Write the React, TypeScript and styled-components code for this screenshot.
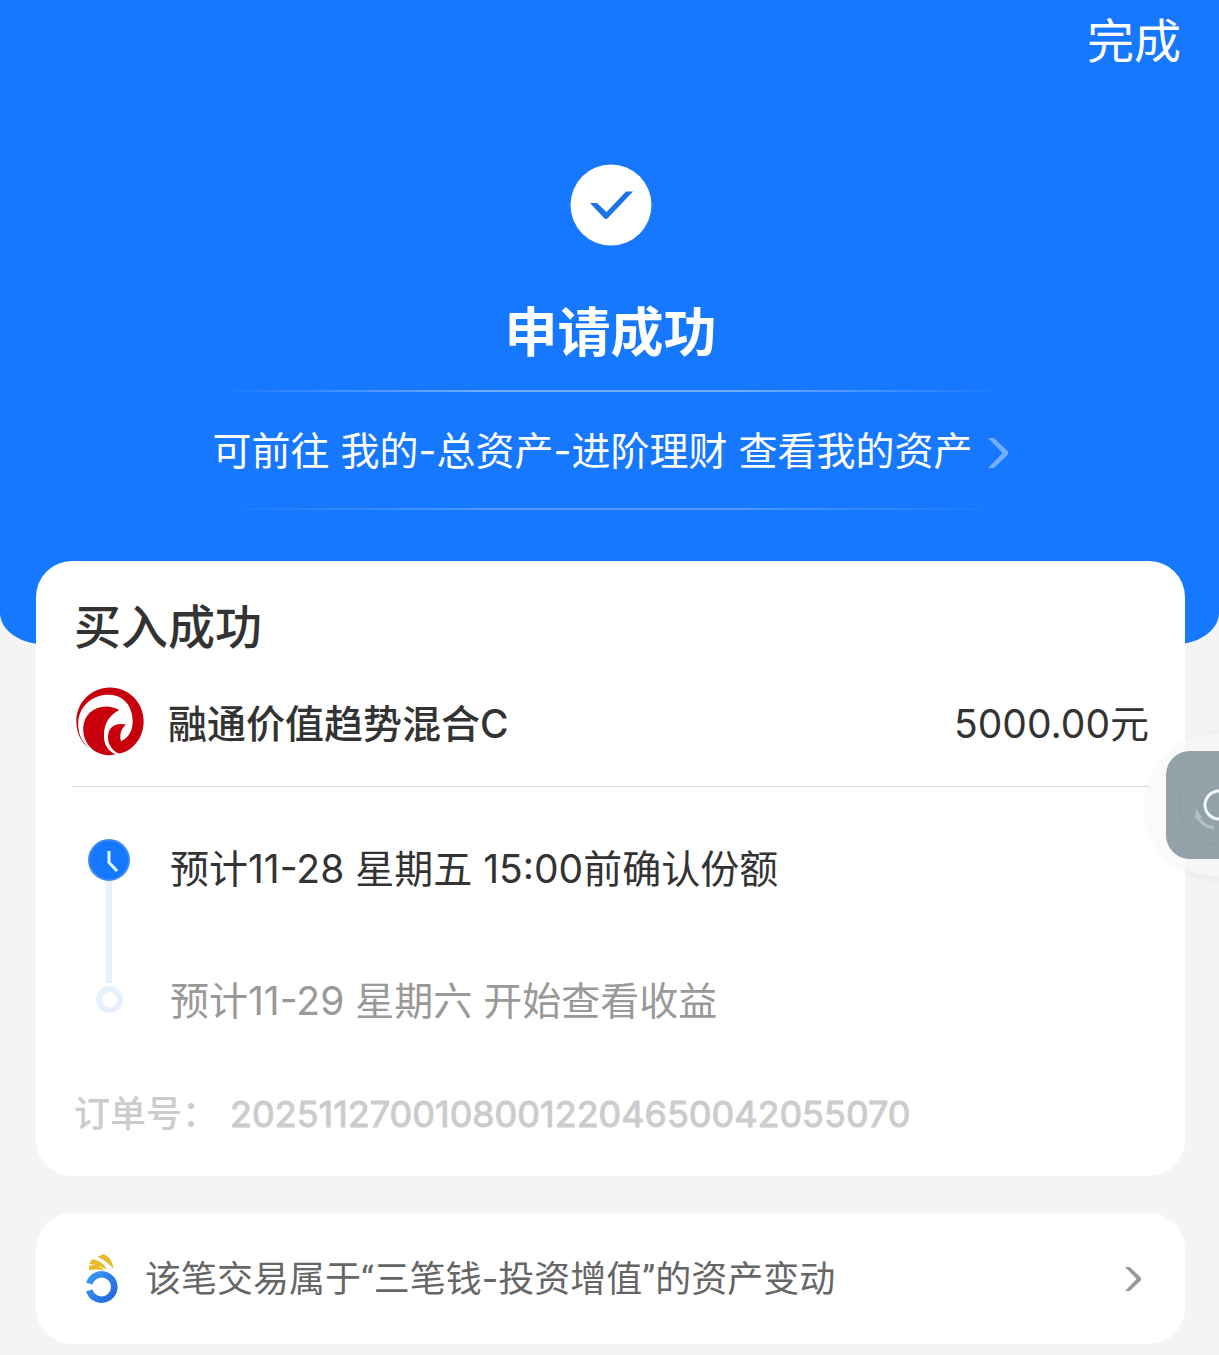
import React from 'react';
import styled, { createGlobalStyle } from 'styled-components';

const GlobalStyle = createGlobalStyle`
  *, *::before, *::after { box-sizing: border-box; }
  body {
    margin: 0;
    background: #f4f4f4;
    color: #333;
    font-family: Inter, 'Noto Sans CJK SC', sans-serif;
  }
  h1, h2, p, ol, dl, dd { margin: 0; padding: 0; }
`;

const Page = styled.div`
  position: relative;
  min-height: 100vh;
  overflow: hidden;
  padding-bottom: 11px;
`;

const Hero = styled.header`
  display: flex;
  flex-direction: column;
  align-items: center;
  height: 645px;
  padding-left: 2px;
  background: #1677ff;
  color: #fff;
  border-radius: 0 0 48px 48px / 0 0 32px 32px;
`;

const TopBar = styled.div`
  display: flex;
  justify-content: flex-end;
  align-self: stretch;
  padding: 5px 38px 0;
`;

const DoneButton = styled.button`
  border: 0;
  padding: 0;
  background: none;
  color: inherit;
  font: inherit;
  font-size: 47px;
  line-height: 72px;
  cursor: pointer;
`;

const SuccessMark = styled.svg`
  width: 82px;
  height: 82px;
  margin-top: 87px;
`;

const HeroTitle = styled.h1`
  margin-top: 49px;
  font-size: 53px;
  font-weight: 700;
  line-height: 76px;
`;

const AssetLink = styled.a`
  display: flex;
  align-items: center;
  gap: 16px;
  margin-top: 19px;
  height: 120px;
  padding-top: 2px;
  color: inherit;
  font-size: 39px;
  line-height: 56px;
  text-decoration: none;
  white-space: nowrap;
  background:
    linear-gradient(90deg, transparent, rgba(255, 255, 255, 0.4) 35%, rgba(255, 255, 255, 0.4) 65%, transparent) top / 100% 2px no-repeat,
    linear-gradient(90deg, transparent, rgba(255, 255, 255, 0.25) 35%, rgba(255, 255, 255, 0.25) 65%, transparent) bottom / 100% 2px no-repeat;

  svg { margin-top: 4px; }
`;

const ChevronIcon = styled.svg<{ $size: number; $color: string }>`
  flex: none;
  width: ${(p) => (p.$size * 2) / 3}px;
  height: ${(p) => p.$size}px;
  fill: ${(p) => p.$color};
`;

const Content = styled.main`
  display: flex;
  flex-direction: column;
  gap: 37px;
  margin-top: -84px;
  padding: 0 34px 0 36px;
`;

const Card = styled.section`
  padding: 30px 36px 34px;
  border-radius: 36px;
  background: #fff;
`;

const CardTitle = styled.h2`
  padding-left: 2px;
  font-size: 47px;
  font-weight: 500;
  line-height: 72px;
`;

const FundRow = styled.div`
  display: flex;
  align-items: center;
  gap: 24px;
  padding: 24px 0 30px 4px;
  border-bottom: 1px solid #ddd;
  font-size: 39px;
  line-height: 64px;
`;

const FundLogo = styled.svg`
  width: 68px;
  height: 69px;
`;

const FundName = styled.span`
  padding-top: 5px;
  font-weight: 500;
`;

const Amount = styled.span`
  margin-left: auto;
  padding-top: 5px;
`;

const Timeline = styled.ol`
  list-style: none;
  padding: 52px 0 0 14px;
`;

const Step = styled.li<{ $pending?: boolean }>`
  display: grid;
  grid-template-columns: 46px 1fr;
  column-gap: 38px;
  min-height: ${(p) => (p.$pending ? 60 : 132)}px;
  color: ${(p) => (p.$pending ? '#999' : '#333')};
  font-size: 39px;
  line-height: 60px;
`;

const Track = styled.div`
  display: flex;
  flex-direction: column;
  align-items: center;
`;

const ClockIcon = styled.svg`
  flex: none;
  width: 42px;
  height: 42px;
`;

const Connector = styled.span`
  flex: 1;
  width: 6px;
  margin-bottom: -12px;
  background: #e7f0fd;
`;

const PendingDot = styled.span`
  width: 27px;
  height: 27px;
  margin-top: 15px;
  border: 6px solid #e7f0fd;
  border-radius: 50%;
`;

const Order = styled.dl`
  display: flex;
  margin-top: 55px;
  padding-left: 2px;
  color: #ccc;
  font-size: 36px;
  font-weight: 500;
  line-height: 56px;
`;

const OrderNumber = styled.dd`
  padding-left: 12px;
  font-weight: 400;
  -webkit-text-stroke: 1px currentColor;
`;

const NoticeLink = styled.a`
  display: flex;
  align-items: center;
  padding: 38px 44px 37px 47px;
  border-radius: 36px;
  background: #fff;
  color: #666;
  font-size: 36px;
  line-height: 56px;
  text-decoration: none;
`;

const NoticeIcon = styled.svg`
  flex: none;
  width: 38px;
  height: 52px;
  margin-right: 24px;
`;

const NoticeText = styled.span`
  flex: 1;
`;

const QuoteMark = styled.span`
  font-family: Roboto, sans-serif;
  line-height: 1;
`;

const Floating = styled.button`
  position: absolute;
  top: 751px;
  right: 0;
  width: 53px;
  height: 108px;
  padding: 0;
  border: 0;
  border-radius: 24px 0 0 24px;
  background: #93a2a9;
  cursor: pointer;

  &::before {
    content: '';
    position: absolute;
    z-index: -1;
    top: -18px;
    left: -19px;
    width: 144px;
    height: 144px;
    border-radius: 50%;
    background: rgba(246, 246, 246, 0.6);
    box-shadow: 0 2px 10px rgba(0, 0, 0, 0.05);
  }
`;

const FloatingLayer = styled.aside`
  position: absolute;
  inset: 0;
  z-index: 1;
  pointer-events: none;

  button { pointer-events: auto; }
`;

const FloatingIcon = styled.svg`
  display: block;
  width: 53px;
  height: 108px;
`;

function Chevron({ size, color }: { size: number; color: string }) {
  return (
    <ChevronIcon $size={size} $color={color} viewBox="0 0 20 30" aria-hidden="true">
      <path d="M0 0H6L20 13.5V16.5L6 30H0L14.5 15Z" />
    </ChevronIcon>
  );
}

export default function App() {
  return (
    <Page>
      <GlobalStyle />
      <Hero>
        <TopBar>
          <DoneButton type="button">完成</DoneButton>
        </TopBar>
        <SuccessMark viewBox="0 0 82 82" aria-hidden="true">
          <circle cx="41" cy="41" r="40.5" fill="#fff" />
          <path d="M20 39H27L36.500 48L56 27.500H63L38 54Q36 56 34 54Z" fill="#1f74e4" />
        </SuccessMark>
        <HeroTitle>申请成功</HeroTitle>
        <AssetLink href="#assets">
          可前往 我的-总资产-进阶理财 查看我的资产
          <Chevron size={30} color="#73adff" />
        </AssetLink>
      </Hero>

      <Content>
        <Card>
          <CardTitle>买入成功</CardTitle>
          <FundRow>
            <FundLogo viewBox="47 51 204 206" aria-hidden="true">
              <path
                fill="#c7000b"
                d="M88 235C60 216 48 185 48 153C48 97 93 52 149 52C205 52 250 97 250 153C250 203 217 243 176 250C158 243 143 225 143 201C143 174 161 155 197 163C184 174 176 192 182 213C204 204 218 182 217 151C216 106 188 75 146 74C98 73 60 105 54 151C51 186 62 214 88 235Z"
              />
              <path
                fill="#c7000b"
                d="M177 120C149 103 112 106 89 127C65 149 64 187 77 213C90 239 119 256 149 255L166 252C143 242 131 224 131 198C130 161 147 133 177 120Z"
              />
            </FundLogo>
            <FundName>融通价值趋势混合C</FundName>
            <Amount>5000.00元</Amount>
          </FundRow>

          <Timeline>
            <Step>
              <Track>
                <ClockIcon viewBox="0 0 42 42" aria-hidden="true">
                  <circle cx="21" cy="21" r="20" fill="#1677ff" stroke="#4389ee" strokeWidth="2" />
                  <path d="M21 12V23.500L29 32" fill="none" stroke="#e6faff" strokeWidth="3" />
                </ClockIcon>
                <Connector />
              </Track>
              <p>预计11-28 星期五 15:00前确认份额</p>
            </Step>
            <Step $pending>
              <Track>
                <PendingDot />
              </Track>
              <p>预计11-29 星期六 开始查看收益</p>
            </Step>
          </Timeline>

          <Order>
            <dt>订单号：</dt>
            <OrderNumber>20251127001080012204650042055070</OrderNumber>
          </Order>
        </Card>

        <NoticeLink href="#details">
          <NoticeIcon viewBox="39 39 114 156" aria-hidden="true">
            <defs>
              <linearGradient id="ring" x1="0" y1="0" x2="1" y2="1">
                <stop offset="0" stopColor="#399af0" />
                <stop offset="1" stopColor="#2466df" />
              </linearGradient>
            </defs>
            <path d="M58 151A38 38 0 1 0 58 131" fill="none" stroke="url(#ring)" strokeWidth="20" />
            <path
              d="M57 91V78Q82 68 104 92Q80 86 57 91ZM58 71L66 58Q98 61 111 89Q89 76 58 71ZM83 50L101 42Q127 55 131 87Q113 66 83 50Z"
              fill="#e8bb2b"
            />
          </NoticeIcon>
          <NoticeText>
            该笔交易属于<QuoteMark>“</QuoteMark>三笔钱-投资增值<QuoteMark>”</QuoteMark>的资产变动
          </NoticeText>
          <Chevron size={24} color="#999" />
        </NoticeLink>
      </Content>

      <FloatingLayer>
        <Floating type="button" aria-label="悬浮窗">
          <FloatingIcon viewBox="0 0 53 108" aria-hidden="true">
            <circle cx="53" cy="54" r="40" fill="none" stroke="#8c9ba2" strokeWidth="1" />
            <circle cx="53" cy="54" r="14" fill="none" stroke="#f2f6f7" strokeWidth="3" />
            <path d="M32 66Q37 76 48 77" fill="none" stroke="#b3bfc4" strokeWidth="3" />
            <path d="M30 58L36 66L29 68Z" fill="#b3bfc4" />
          </FloatingIcon>
        </Floating>
      </FloatingLayer>
    </Page>
  );
}
